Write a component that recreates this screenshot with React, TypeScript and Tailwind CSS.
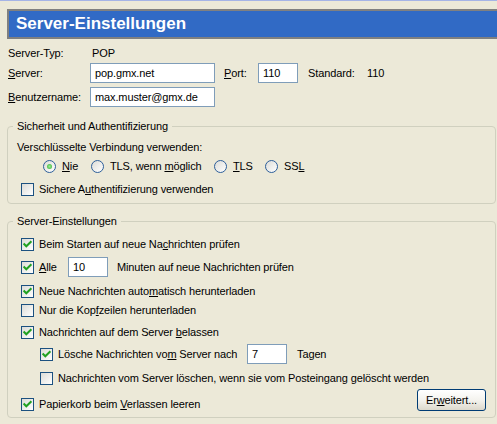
import React from "react";

function Check({ checked }: { checked?: boolean }) {
  return (
    <span className="relative block w-[13px] h-[13px] shrink-0 border border-[#1C5180] bg-linear-to-br from-[#DCDCD7] to-white">
      {checked && (
        <svg className="absolute left-0 top-0" width="11" height="11" viewBox="0 0 11 11">
          <path d="M2.3 5.2 L4.3 7.3 L8.7 2.9" fill="none" stroke="#21A121" strokeWidth="2" strokeLinecap="square" />
        </svg>
      )}
    </span>
  );
}

function Radio({ checked }: { checked?: boolean }) {
  return (
    <span className="flex items-center justify-center w-[13px] h-[13px] shrink-0 rounded-full border border-[#2C5E9A] bg-linear-to-br from-[#DCDCD7] to-white">
      {checked && (
        <span className="block w-[5px] h-[5px] rounded-full bg-[radial-gradient(circle,#9BEA98_0%,#2DB12A_100%)]" />
      )}
    </span>
  );
}

function Field({ w, children }: { w: string; children: React.ReactNode }) {
  return (
    <div className={`${w} h-[20px] shrink-0 border border-[#7F9DB9] bg-white pl-[4px] flex items-center`}>
      {children}
    </div>
  );
}

export default function App() {
  return (
    <div className="w-[497px] h-[424px] overflow-hidden bg-[#ECE9D8] border-t border-[#A5B4E6] text-[11px] leading-[13px] tracking-[-0.12px] text-black font-['Liberation_Sans',Arial,sans-serif] flex flex-col">
      <div className="mt-[8px] ml-[7px] -mr-[10px] h-[30px] shrink-0 border-2 border-[#808080] bg-[#316AC5] flex items-center pl-[7px]">
        <span className="text-white font-bold text-[17px] leading-[20px] tracking-normal">Server-Einstellungen</span>
      </div>

      <div className="pl-[8px] flex flex-col">
        <div className="mt-[4px] h-[20px] flex items-center">
          <span className="w-[82px]">Server-Typ:</span>
          <span className="pl-[2px]">POP</span>
        </div>
        <div className="h-[20px] flex items-center">
          <span className="w-[82px]"><u>S</u>erver:</span>
          <Field w="w-[125px]">pop.gmx.net</Field>
          <span className="ml-[9px] w-[34px]"><u>P</u>ort:</span>
          <Field w="w-[40px]">110</Field>
          <span className="ml-[10px] w-[59px]">Standard:</span>
          <span>110</span>
        </div>
        <div className="mt-[4px] h-[20px] flex items-center">
          <span className="w-[82px]"><u>B</u>enutzername:</span>
          <Field w="w-[125px]">max.muster@gmx.de</Field>
        </div>
      </div>

      <fieldset className="mt-[12px] ml-[7px] mr-[1px] border border-[#D0D0BF] rounded-[4px]">
        <legend className="ml-[5px] px-[4px] h-[14px] leading-[14px]">Sicherheit und Authentifizierung</legend>
        <div className="pl-[9px] pt-[5px] pb-[4px] flex flex-col">
          <div className="h-[19px] flex items-center">Verschlüsselte Verbindung verwenden:</div>
          <div className="h-[19px] pl-[26px] flex items-center">
            <div className="w-[48px] flex items-center gap-[6px]">
              <Radio checked />
              <span><u>N</u>ie</span>
            </div>
            <div className="w-[123px] flex items-center gap-[6px]">
              <Radio />
              <span>TLS, wenn <u>m</u>öglich</span>
            </div>
            <div className="w-[51px] flex items-center gap-[6px]">
              <Radio />
              <span><u>T</u>LS</span>
            </div>
            <div className="flex items-center gap-[6px]">
              <Radio />
              <span>SS<u>L</u></span>
            </div>
          </div>
          <div className="mt-[4px] h-[19px] pl-[4px] flex items-center gap-[5px]">
            <Check />
            <span>Sichere A<u>u</u>thentifizierung verwenden</span>
          </div>
        </div>
      </fieldset>

      <fieldset className="mt-[10px] ml-[7px] mr-[1px] border border-[#D0D0BF] rounded-[4px]">
        <legend className="ml-[5px] px-[4px] h-[14px] leading-[14px]">Server-Einstellungen</legend>
        <div className="pl-[13px] pr-[9px] pb-[5px] flex flex-col">
          <div className="mt-[8px] h-[16px] flex items-center gap-[5px]">
            <Check checked />
            <span>Beim Starten auf neue Na<u>c</u>hrichten prüfen</span>
          </div>
          <div className="mt-[5px] h-[20px] flex items-center">
            <Check checked />
            <span className="ml-[5px] w-[29px]"><u>A</u>lle</span>
            <Field w="w-[40px]">10</Field>
            <span className="ml-[9px]">Minuten auf neue Nachrichten prüfen</span>
          </div>
          <div className="mt-[6px] h-[16px] flex items-center gap-[5px]">
            <Check checked />
            <span>Neue Nachrichten auto<u>m</u>atisch herunterladen</span>
          </div>
          <div className="mt-[3px] h-[16px] flex items-center gap-[5px]">
            <Check />
            <span>Nur die Kop<u>f</u>zeilen herunterladen</span>
          </div>
          <div className="mt-[6px] h-[16px] flex items-center gap-[5px]">
            <Check checked />
            <span>Nachrichten auf dem Server <u>b</u>elassen</span>
          </div>
          <div className="mt-[4px] h-[20px] pl-[19px] flex items-center">
            <Check checked />
            <span className="ml-[5px] w-[189px]">Lösche Nachrichten vo<u>m</u> Server nach</span>
            <Field w="w-[40px]">7</Field>
            <span className="ml-[10px]">Tagen</span>
          </div>
          <div className="mt-[6px] h-[16px] pl-[19px] flex items-center gap-[5px]">
            <Check />
            <span>Nachrichten vom Server löschen, wenn sie vom Posteingang gelöscht werden</span>
          </div>
          <div className="mt-[3px] flex items-start justify-between">
            <div className="mt-[7px] h-[16px] flex items-center gap-[5px]">
              <Check checked />
              <span>Papierkorb beim <u>V</u>erlassen leeren</span>
            </div>
            <button className="w-[69px] h-[22px] rounded-[3px] border border-[#003C74] bg-linear-to-b from-white via-[#F4F3EE] to-[#DCD8CC] flex items-center justify-center text-[11px] text-black">
              <span>Er<u>w</u>eitert...</span>
            </button>
          </div>
        </div>
      </fieldset>
    </div>
  );
}
